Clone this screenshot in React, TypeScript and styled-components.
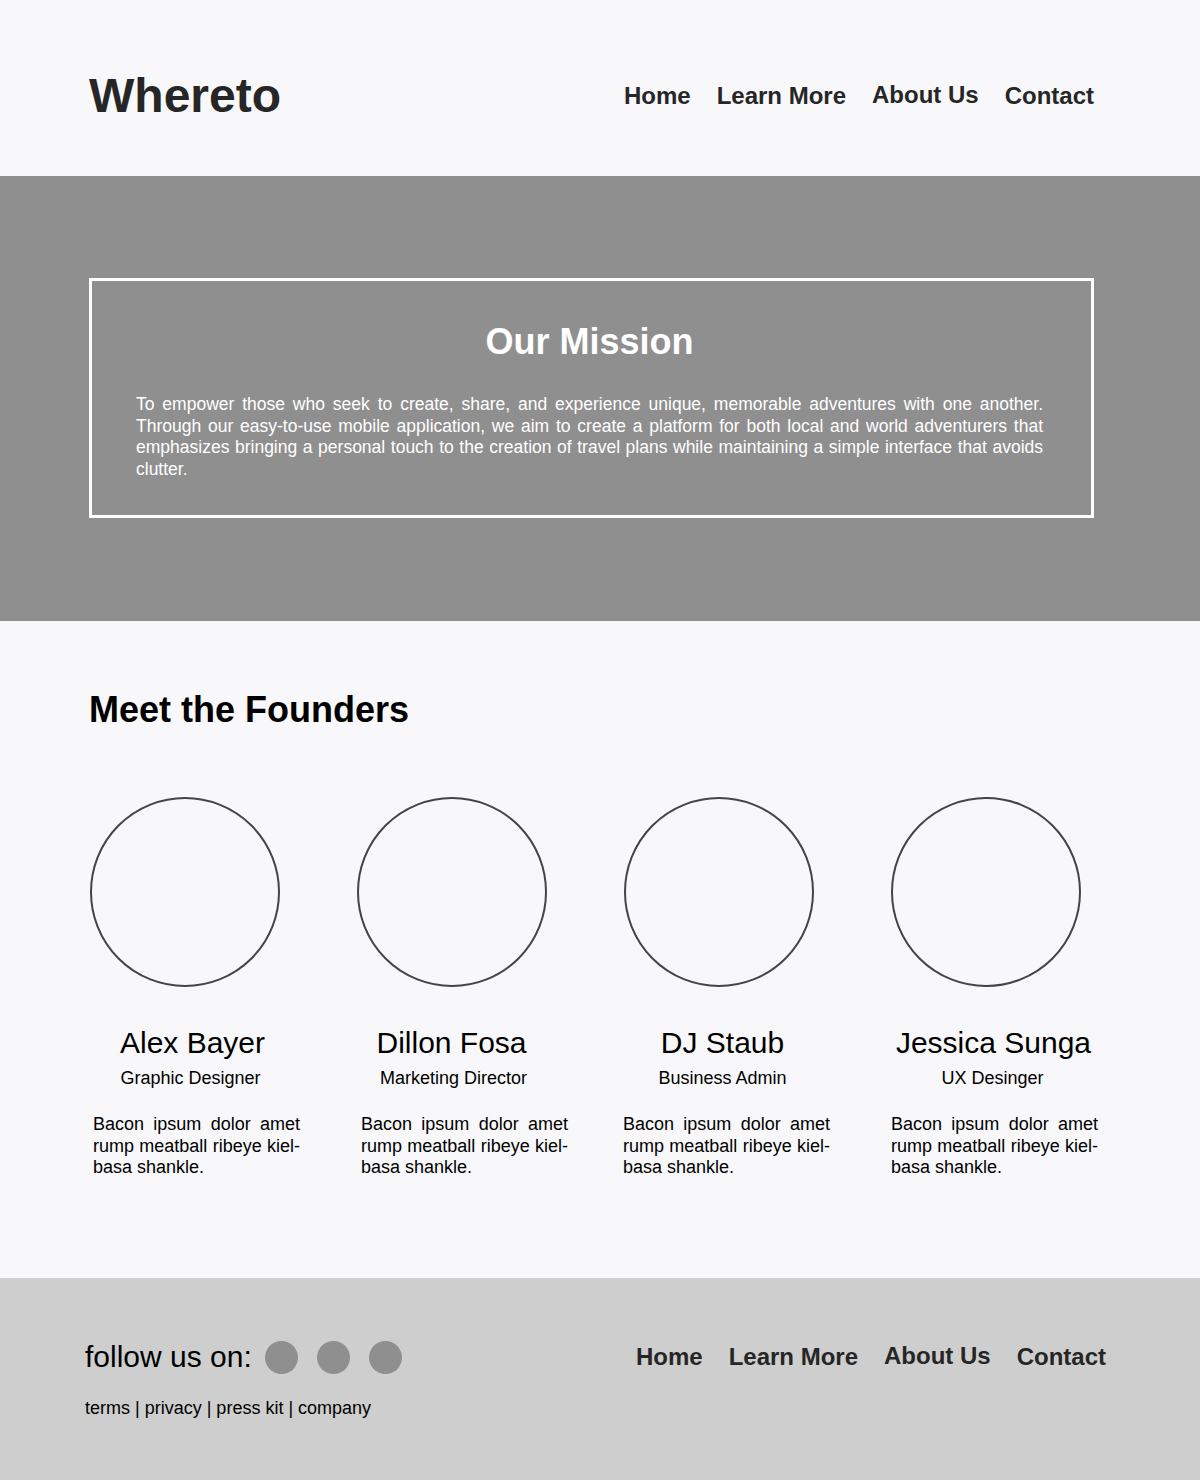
import React from "react";
import styled, { createGlobalStyle } from "styled-components";

const GlobalStyle = createGlobalStyle`
  html, body {
    margin: 0;
    padding: 0;
    background: #f8f8fa;
    font-family: "Liberation Sans", Arial, sans-serif;
  }
  * { box-sizing: border-box; }
`;

const Page = styled.div`
  width: 1200px;
  display: flex;
  flex-direction: column;
`;

const Header = styled.header`
  height: 176px;
  padding: 16px 106px 0 89px;
  display: flex;
  align-items: center;
  justify-content: space-between;
  background: #f8f8fa;
`;

const Logo = styled.h1`
  margin: 0;
  font-size: 48px;
  line-height: 56px;
  font-weight: 700;
  color: #262626;
`;

const Nav = styled.nav`
  display: flex;
  align-items: center;
  gap: 26px;
`;

const NavLink = styled.a<{ $raise?: boolean }>`
  font-size: 24px;
  line-height: 28px;
  font-weight: 700;
  color: #262626;
  text-decoration: none;
  margin-top: ${(p) => (p.$raise ? "-2px" : "0")};
`;

const Hero = styled.section`
  background: #8f8f8f;
  padding: 102px 106px 103px 89px;
`;

const MissionBox = styled.div`
  border: 3px solid #ffffff;
  padding: 40px 48px 35px 44px;
  color: #ffffff;
`;

const MissionTitle = styled.h2`
  margin: 0;
  font-size: 36px;
  line-height: 41px;
  font-weight: 700;
  text-align: center;
`;

const MissionText = styled.p`
  margin: 32px 0 0 0;
  font-size: 17.5px;
  line-height: 21.5px;
  text-align: justify;
`;

const Founders = styled.section`
  background: #f8f8fa;
  padding: 68px 104px 99px 89px;
`;

const SectionTitle = styled.h2`
  margin: 0;
  font-size: 36px;
  line-height: 42px;
  font-weight: 700;
  color: #000;
`;

const FounderGrid = styled.div`
  margin-top: 66px;
  display: grid;
  grid-template-columns: repeat(4, 207px);
  column-gap: 60px;
`;

const FounderCard = styled.div`
  display: flex;
  flex-direction: column;
`;

const Avatar = styled.div`
  width: 190px;
  height: 190px;
  margin-left: 1px;
  border: 2px solid #444444;
  border-radius: 50%;
`;

const Name = styled.h3<{ $shift: number }>`
  margin: 39px 0 0 0;
  font-size: 30px;
  line-height: 34px;
  font-weight: 400;
  color: #000;
  text-align: center;
  transform: translateX(${(p) => p.$shift}px);
`;

const Role = styled.div<{ $shift: number }>`
  margin-top: 8px;
  font-size: 18px;
  line-height: 21px;
  color: #000;
  text-align: center;
  transform: translateX(${(p) => p.$shift}px);
`;

const Bio = styled.p<{ $indent: number }>`
  margin: 25px 0 0 ${(p) => p.$indent}px;
  width: 207px;
  font-size: 18px;
  line-height: 21.5px;
  color: #000;
  text-align: justify;
`;

const Footer = styled.footer`
  background: #cecece;
  padding: 62px 94px 62px 85px;
  display: flex;
  justify-content: space-between;
  align-items: flex-start;
`;

const FooterLeft = styled.div`
  display: flex;
  flex-direction: column;
`;

const FollowRow = styled.div`
  display: flex;
  align-items: center;
  height: 34px;
`;

const FollowLabel = styled.span`
  font-size: 30px;
  line-height: 34px;
  color: #000;
`;

const SocialList = styled.div`
  display: flex;
  gap: 19px;
  margin-left: 13px;
  margin-top: 1px;
`;

const SocialDot = styled.span`
  width: 33px;
  height: 33px;
  border-radius: 50%;
  background: #8f8f8f;
`;

const LegalLinks = styled.div`
  margin-top: 24px;
  font-size: 18px;
  line-height: 21px;
  color: #000;
`;

const FooterNav = styled(Nav)`
  height: 34px;
  gap: 26px;
`;

const founders = [
  { name: "Alex Bayer", role: "Graphic Designer", shift: 0, roleShift: -2, indent: 4 },
  { name: "Dillon Fosa", role: "Marketing Director", shift: -8, roleShift: -6, indent: 5 },
  { name: "DJ Staub", role: "Business Admin", shift: -4, roleShift: -4, indent: 0 },
  { name: "Jessica Sunga", role: "UX Desinger", shift: 0, roleShift: -1, indent: 1 },
];

const navItems = ["Home", "Learn More", "About Us", "Contact"];

export default function App() {
  return (
    <Page>
      <GlobalStyle />
      <Header>
        <Logo>Whereto</Logo>
        <Nav>
          {navItems.map((n) => (
            <NavLink key={n} href="#" $raise={n === "About Us"}>
              {n}
            </NavLink>
          ))}
        </Nav>
      </Header>

      <Hero>
        <MissionBox>
          <MissionTitle>Our Mission</MissionTitle>
          <MissionText>
            To empower those who seek to create, share, and experience unique, memorable
            adventures with one another. Through our easy-to-use mobile application, we aim to
            create a platform for both local and world adventurers that emphasizes bringing a
            personal touch to the creation of travel plans while maintaining a simple interface
            that avoids clutter.
          </MissionText>
        </MissionBox>
      </Hero>

      <Founders>
        <SectionTitle>Meet the Founders</SectionTitle>
        <FounderGrid>
          {founders.map((f) => (
            <FounderCard key={f.name}>
              <Avatar />
              <Name $shift={f.shift}>{f.name}</Name>
              <Role $shift={f.roleShift}>{f.role}</Role>
              <Bio $indent={f.indent}>
                Bacon ipsum dolor amet rump meatball ribeye kiel-basa shankle.
              </Bio>
            </FounderCard>
          ))}
        </FounderGrid>
      </Founders>

      <Footer>
        <FooterLeft>
          <FollowRow>
            <FollowLabel>follow us on:</FollowLabel>
            <SocialList>
              <SocialDot />
              <SocialDot />
              <SocialDot />
            </SocialList>
          </FollowRow>
          <LegalLinks>terms | privacy | press kit | company</LegalLinks>
        </FooterLeft>
        <FooterNav>
          {navItems.map((n) => (
            <NavLink key={n} href="#" $raise={n === "About Us"}>
              {n}
            </NavLink>
          ))}
        </FooterNav>
      </Footer>
    </Page>
  );
}
